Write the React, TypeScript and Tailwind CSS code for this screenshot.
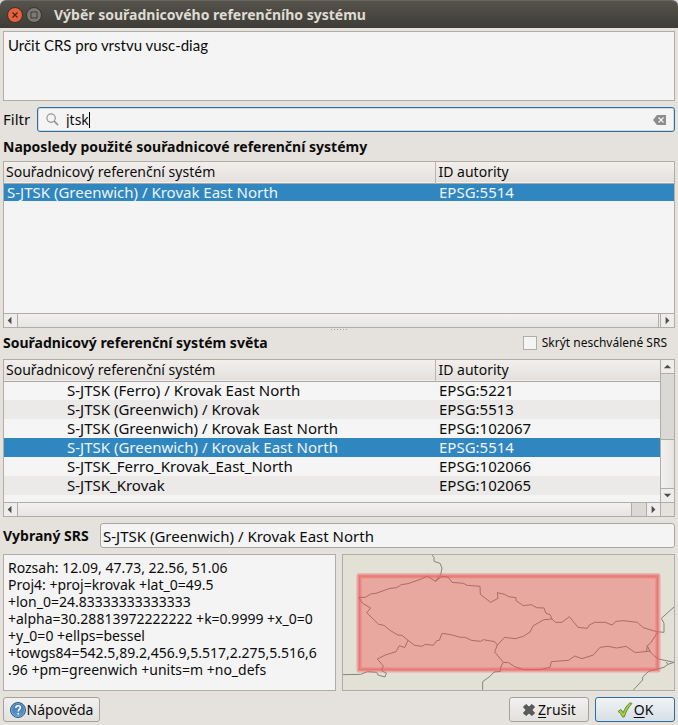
import type { ReactNode } from "react";

type Crs = { name: string; id: string; selected?: boolean };

const recent: Crs[] = [
  { name: "S-JTSK (Greenwich) / Krovak East North", id: "EPSG:5514", selected: true },
];

const world: Crs[] = [
  { name: "S-JTSK (Ferro) / Krovak East North", id: "EPSG:5221" },
  { name: "S-JTSK (Greenwich) / Krovak", id: "EPSG:5513" },
  { name: "S-JTSK (Greenwich) / Krovak East North", id: "EPSG:102067" },
  { name: "S-JTSK (Greenwich) / Krovak East North", id: "EPSG:5514", selected: true },
  { name: "S-JTSK_Ferro_Krovak_East_North", id: "EPSG:102066" },
  { name: "S-JTSK_Krovak", id: "EPSG:102065" },
];

const borders = [
  "282,21 288,28 288,40 306,46 312,60 308,80 292,100 268,84 250,93 210,107 190,110 176,119 156,121 114,136 98,138 82,148 62,148 74,166 98,180 86,194 122,229 138,232 156,247 180,261 192,262 210,277 230,292 252,295 262,289 286,292 296,278 304,277 312,256 338,260 368,268 382,268 400,277 428,280 436,275 470,281 478,291 500,268 515,270 532,272 556,265 576,252 586,233 618,215 642,213",
  "292,100 312,85 330,87 342,103 376,106 388,112 426,115 427,139 458,163 480,151 478,134 500,139 512,146 534,149 534,158 556,173 580,170 596,179 618,180 624,196 636,200 642,213 652,223 672,223 694,206 720,238 748,241 754,231 770,223 802,223 822,231 834,220 856,218 898,223 916,239 956,251 978,253 978,226 970,211 1008,177",
  "210,277 200,299 184,293 174,311 142,321 118,333 136,354 130,368 145,375 141,387 120,381 116,373 88,371 68,379 15,380",
  "478,291 470,312 496,343 512,344 530,356 556,365 606,365 636,358 640,341 692,337 710,324 732,332 766,321 786,298 810,295 836,300 864,295 892,314 938,309",
  "926,309 928,293 938,285 960,251",
  "928,293 936,311 948,323 962,333 1008,343",
  "984,342 990,349 1008,343",
  "990,349 978,358 932,370 914,387 914,396 886,426",
  "496,343 488,357 488,370 468,372 456,385 434,401 434,426",
];

const arrows = {
  left: "M8 3v8L4 7z",
  right: "M5 3v8l4-4z",
  up: "M3 9h8L7 5z",
  down: "M3 5h8L7 9z",
};

function Arrow({ dir, className }: { dir: keyof typeof arrows; className: string }) {
  return (
    <button
      type="button"
      aria-label={`Posunout ${dir}`}
      className={`flex items-center justify-center bg-[#efedeb] ${className}`}
    >
      <svg viewBox="0 0 14 14" className="size-[13px]">
        <path d={arrows[dir]} fill="#4d4d4d" />
      </svg>
    </button>
  );
}

function CrsTable({ rows, indent, label, rowClass }: { rows: Crs[]; indent: string; label: string; rowClass: string }) {
  return (
    <table aria-label={label} className="w-full table-fixed border-collapse text-left">
      <colgroup>
        <col className="w-[431px]" />
        <col />
      </colgroup>
      <thead>
        <tr className="h-[21px] border-b border-[#aaa6a1] bg-linear-to-b from-[#f2efed] to-[#e3e0dd]">
          <th className="border-r border-[#bab7b3] px-[2px] leading-5 font-normal">Souřadnicový referenční systém</th>
          <th className="px-[3px] leading-5 font-normal">ID autority</th>
        </tr>
      </thead>
      <tbody className="text-[15px]">
        {rows.map((r) => (
          <tr
            key={r.id}
            className={`${rowClass} ${r.selected ? "bg-[#3087c0] text-[#eef3f7]" : "odd:bg-[#f5f5f5] even:bg-[#ebeae9]"}`}
          >
            <td className={`leading-[17px] ${indent}`}>{r.name}</td>
            <td className="pl-[4px] leading-[17px]">{r.id}</td>
          </tr>
        ))}
      </tbody>
    </table>
  );
}

function DialogButton({ children, className }: { children: ReactNode; className: string }) {
  return (
    <button
      type="button"
      className={`flex h-[25px] items-center justify-center rounded-[3px] border bg-linear-to-b ${className}`}
    >
      {children}
    </button>
  );
}

export default function App() {
  return (
    <div className="bg-[#d8d7d5] font-['Noto_Sans',sans-serif] text-[14px] leading-[17px] text-[#0c0c0c]">
      <header className="flex h-7 items-center rounded-t-md border-t border-[#69665f] bg-linear-to-b from-[#56534b] to-[#3d3c37] pl-[7px]">
        <button type="button" aria-label="Zavřít">
          <svg viewBox="0 0 16 16" className="size-4">
            <circle cx="8" cy="8" r="7.5" fill="#e9613a" stroke="#35332e" />
            <path d="M5.5 5.5l5 5m0-5l-5 5" stroke="#49271c" strokeWidth="1.3" />
          </svg>
        </button>
        <button type="button" aria-label="Maximalizovat" className="ml-[3px]">
          <svg viewBox="0 0 16 16" className="size-4">
            <circle cx="8" cy="8" r="7.5" fill="#7b7972" stroke="#35332e" />
            <rect x="5" y="5" width="6" height="6" fill="none" stroke="#3f3d38" />
          </svg>
        </button>
        <h1 className="ml-3 font-bold whitespace-nowrap text-[#dfdbd2]">Výběr souřadnicového referenčního systému</h1>
      </header>

      <main className="flex flex-col bg-[#e5e2dd] p-[3px]">
        <div className="h-[70px] border border-[#b0aca8] bg-[#f4f4f4] px-1 py-[5px] font-['Lato',sans-serif] text-[15px]">
          Určit CRS pro vrstvu vusc-diag
        </div>

        <div className="mt-[6px] flex items-center gap-[6px]">
          <label htmlFor="filter" className="min-w-7 text-[15px]">
            Filtr
          </label>
          <div className="flex h-[25px] flex-1 items-center rounded-[3px] border border-[#2b6d9c] bg-[#f4f4f4] px-2 inset-shadow-[0_0_0_1px_#cfdce5]">
            <svg viewBox="0 0 14 14" className="size-[13px]" fill="none" stroke="#969696">
              <circle cx="5.5" cy="5.5" r="4.500" strokeWidth="1.3" />
              <path d="M8.8 8.8l4.200 4.200" strokeWidth="1.8" />
            </svg>
            <input id="filter" defaultValue="jtsk" className="ml-[7px] field-sizing-content bg-transparent outline-none" />
            <span className="h-4 w-px bg-black" />
            <button type="button" aria-label="Vymazat" className="ml-auto">
              <svg viewBox="0 0 13 10" className="h-[10px] w-[13px]">
                <path d="M4 0h9v10H4L0 5z" fill="#8c8c8c" />
                <path d="M5.5 2.5l5 5m0-5l-5 5" stroke="#f4f4f4" strokeWidth="1.2" />
              </svg>
            </button>
          </div>
        </div>

        <h2 className="mt-[6px] h-[23px] leading-[18px] font-bold whitespace-nowrap">
          Naposledy použité souřadnicové referenční systémy
        </h2>

        <section className="flex h-[167px] flex-col border border-[#b0aca8] bg-[#f4f4f4]">
          <div className="flex-1">
            <CrsTable rows={recent} indent="pl-[3px]" label="Naposledy použité" rowClass="h-[17px]" />
          </div>
          <div className="flex h-[14px] border-t border-[#b0aca8] bg-linear-to-b from-[#f2f1f0] to-[#e6e5e3]">
            <Arrow dir="left" className="w-[14px] border-r border-[#b0aca8]" />
            <div className="flex-1" />
            <Arrow dir="right" className="w-[16px] border-l-3 border-double border-[#b0aca8]" />
          </div>
        </section>

        <div className="flex h-[3px] items-center justify-center gap-[2px]">
          {Array.from({ length: 6 }, (_, i) => (
            <span key={i} className="size-px bg-[#a5a29e]" />
          ))}
        </div>

        <div className="flex h-[28px] items-center justify-between pb-[5px]">
          <h2 className="font-bold whitespace-nowrap">Souřadnicový referenční systém světa</h2>
          <label className="flex items-center gap-[5px] pr-2 text-[12px] whitespace-nowrap">
            <input type="checkbox" className="size-[14px] appearance-none border border-[#b0aca8] bg-[#f4f4f4]" />
            Skrýt neschválené SRS
          </label>
        </div>

        <section className="h-[158px] border border-[#b0aca8] bg-[#f4f4f4]">
          <div className="flex h-[142px]">
            <div className="min-w-0 flex-1">
              <CrsTable rows={world} indent="pl-[63px]" label="Souřadnicové systémy světa" rowClass="h-[19px]" />
            </div>
            <div className="flex w-[14px] flex-col border-l border-[#b0aca8] bg-[#dbd9d6]">
              <Arrow dir="up" className="h-[14px] border-b border-[#b0aca8]" />
              <div className="flex-1" />
              <div className="h-[49px] border-t border-[#b0aca8] bg-linear-to-r from-[#f2f1f0] to-[#e6e5e3]" />
              <Arrow dir="down" className="h-[14px] border-t border-[#b0aca8]" />
            </div>
          </div>
          <div className="flex h-[14px] border-t border-[#b0aca8]">
            <Arrow dir="left" className="w-[14px] border-r border-[#b0aca8]" />
            <div className="flex-1 bg-linear-to-b from-[#f2f1f0] to-[#e6e5e3]" />
            <div className="w-[16px] border-x border-[#b0aca8] bg-[#dbd9d6]" />
            <Arrow dir="right" className="w-[13px]" />
            <div className="w-[14px] border-l border-[#b0aca8] bg-[#e5e2dd]" />
          </div>
        </section>

        <div className="mt-[6px] flex items-center gap-[6px]">
          <label htmlFor="selected" className="min-w-[91px] font-bold whitespace-nowrap">
            Vybraný SRS
          </label>
          <input
            id="selected"
            readOnly
            value="S-JTSK (Greenwich) / Krovak East North"
            className="h-[25px] min-w-0 flex-1 rounded-[3px] border border-[#aaa7a1] bg-[#f4f4f4] px-[2px] text-[15px] outline-none"
          />
        </div>

        <div className="mt-[6px] grid h-[137px] grid-cols-2 gap-[6px]">
          <div className="border border-[#b0aca8] bg-[#f4f4f4] px-1 py-[4px] whitespace-nowrap">
            Rozsah: 12.09, 47.73, 22.56, 51.06
            <br />
            Proj4: +proj=krovak +lat_0=49.5
            <br />
            +lon_0=24.83333333333333
            <br />
            +alpha=30.28813972222222 +k=0.9999 +x_0=0
            <br />
            +y_0=0 +ellps=bessel
            <br />
            +towgs84=542.5,89.2,456.9,5.517,2.275,5.516,6
            <br />
            .96 +pm=greenwich +units=m +no_defs
          </div>
          <div className="overflow-hidden border border-[#b0aca8] bg-[#e3e1d5]">
            <svg viewBox="15 21 993 405" className="size-full" role="img" aria-label="Mapa rozsahu">
              <g fill="none" stroke="#85857c" strokeWidth="3" strokeLinejoin="round">
                {borders.map((p) => (
                  <polyline key={p} points={p} />
                ))}
              </g>
              <rect x="63" y="83" width="897" height="283" fill="#f04040" fillOpacity="0.36" />
              <rect x="63" y="83" width="897" height="283" fill="none" stroke="#f05858" strokeOpacity="0.4" strokeWidth="15" strokeLinejoin="round" />
              <rect x="63" y="83" width="897" height="283" fill="none" stroke="#e86060" strokeOpacity="0.4" strokeWidth="6" />
            </svg>
          </div>
        </div>

        <footer className="mt-[6px] flex items-center gap-[6px]">
          <DialogButton className="mr-auto w-[97px] border-[#a5a29d] from-[#f3f1f0] to-[#e3e1de]">
            <svg viewBox="0 0 16 16" className="size-4">
              <defs>
                <linearGradient id="help" x2="0" y2="1">
                  <stop offset="0" stopColor="#3c73ab" />
                  <stop offset="1" stopColor="#5c9bd0" />
                </linearGradient>
              </defs>
              <circle cx="8" cy="8" r="7.5" fill="url(#help)" stroke="#295c8c" />
              <circle cx="8" cy="8" r="6.5" fill="none" stroke="#82acd3" strokeWidth="0.8" />
              <path d="M5.8 6c0-3 4.6-3 4.6-.4C10.400 7.300 8.200 7.400 8.200 9.500" fill="none" stroke="#fff" strokeWidth="1.5" />
              <circle cx="8.200" cy="11.700" r="1" fill="#fff" />
            </svg>
            <span className="pl-px">Nápověda</span>
          </DialogButton>
          <DialogButton className="w-20 border-[#a5a29d] from-[#f3f1f0] to-[#e3e1de]">
            <svg viewBox="0 0 14 14" className="size-[14px]">
              <path
                d="M4 1.500L7 4.200l3-2.700L12.500 4 9.700 7l2.800 3L10 12.500 7 9.800l-3 2.700L1.500 10l2.800-3L1.500 4z"
                fill="#5b5d5b"
                stroke="#464846"
                strokeLinejoin="round"
              />
            </svg>
            <span className="pl-[2px]">
              <u className="underline-offset-2">Z</u>rušit
            </span>
          </DialogButton>
          <DialogButton className="w-20 border-[#2b6d9c] from-[#f1f3f4] to-[#d6e0e6]">
            <svg viewBox="0 0 16 16" className="size-4">
              <path
                d="M1 9.500l3-2 2.200 3.200C7.800 6.500 10 3 13 .8l2 .6C11.500 5 9 9.500 7.200 15H5.500C4.500 12.500 3 10.500 1 9.500z"
                fill="#a6cf42"
                stroke="#5b8229"
                strokeWidth="0.900"
                strokeLinejoin="round"
              />
            </svg>
            <span className="pl-px">
              <u className="underline-offset-2">O</u>K
            </span>
          </DialogButton>
        </footer>
      </main>
    </div>
  );
}
